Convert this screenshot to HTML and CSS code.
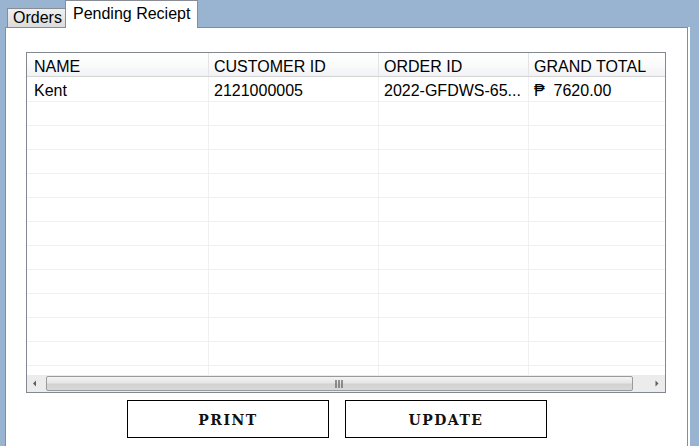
FILE: index.html
```html
<!DOCTYPE html>
<html>
<head>
<meta charset="utf-8">
<link rel="stylesheet" href="styles.css">
</head>
<body>
<div class="tabs">
  <div class="tab tab-orders">Orders</div>
  <div class="tab tab-active">Pending Reciept</div>
</div>
<div class="pane">
  <div class="grid">
    <div class="row head">
      <div class="cell first">NAME</div>
      <div class="cell">CUSTOMER ID</div>
      <div class="cell">ORDER ID</div>
      <div class="cell">GRAND TOTAL</div>
    </div>
    <div class="rows">
      <div class="row data first-row">
        <div class="cell first">Kent</div>
        <div class="cell">2121000005</div>
        <div class="cell">2022-GFDWS-65...</div>
        <div class="cell">₱&nbsp; 7620.00</div>
      </div>
      <div class="row data"><div class="cell"></div><div class="cell"></div><div class="cell"></div><div class="cell"></div></div>
      <div class="row data"><div class="cell"></div><div class="cell"></div><div class="cell"></div><div class="cell"></div></div>
      <div class="row data"><div class="cell"></div><div class="cell"></div><div class="cell"></div><div class="cell"></div></div>
      <div class="row data"><div class="cell"></div><div class="cell"></div><div class="cell"></div><div class="cell"></div></div>
      <div class="row data"><div class="cell"></div><div class="cell"></div><div class="cell"></div><div class="cell"></div></div>
      <div class="row data"><div class="cell"></div><div class="cell"></div><div class="cell"></div><div class="cell"></div></div>
      <div class="row data"><div class="cell"></div><div class="cell"></div><div class="cell"></div><div class="cell"></div></div>
      <div class="row data"><div class="cell"></div><div class="cell"></div><div class="cell"></div><div class="cell"></div></div>
      <div class="row data"><div class="cell"></div><div class="cell"></div><div class="cell"></div><div class="cell"></div></div>
      <div class="row data"><div class="cell"></div><div class="cell"></div><div class="cell"></div><div class="cell"></div></div>
      <div class="row data"><div class="cell"></div><div class="cell"></div><div class="cell"></div><div class="cell"></div></div>
      <div class="row data"><div class="cell"></div><div class="cell"></div><div class="cell"></div><div class="cell"></div></div>
    </div>
    <div class="hscroll">
      <div class="arrow">
        <svg width="17" height="17" viewBox="0 0 17 17"><path d="M6 8.5 L9 5.5 L9 11.5 Z" fill="#606060"/></svg>
      </div>
      <div class="track">
        <div class="thumb">
          <svg width="9" height="8" viewBox="0 0 9 8"><path d="M1 0v8M4 0v8M7 0v8" stroke="#6a6a6a" stroke-width="1.4"/></svg>
        </div>
      </div>
      <div class="arrow">
        <svg width="17" height="17" viewBox="0 0 17 17"><path d="M10.5 8.5 L7.5 5.5 L7.5 11.5 Z" fill="#606060"/></svg>
      </div>
    </div>
  </div>
  <div class="buttons">
    <button class="btn">PRINT</button>
    <button class="btn">UPDATE</button>
  </div>
</div>
</body>
</html>
```
FILE: styles.css
```css
html, body {
  margin: 0;
  padding: 0;
  height: 100%;
  overflow: hidden;
}
body {
  background: #99b4d1;
  font-family: "Liberation Sans", Arial, sans-serif;
  font-size: 16px;
  color: #000;
}
.tabs {
  display: flex;
  align-items: flex-end;
  height: 27px;
  padding-left: 7px;
}
.tab {
  box-sizing: border-box;
  border: 1px solid #898c95;
  border-bottom: none;
  line-height: 18px;
  white-space: nowrap;
}
.tab-orders {
  width: 59px;
  height: 19px;
  margin-right: -1px;
  padding: 0 0 0 5px;
  background: linear-gradient(#f0f0f0, #dcdcdc);
}
.tab-active {
  position: relative;
  z-index: 1;
  width: 133px;
  height: 28px;
  margin-bottom: -1px;
  padding: 4px 0 0 7px;
  background: #fff;
}
.pane {
  box-sizing: border-box;
  margin-left: 5px;
  width: 683px;
  height: 430px;
  background: #fff;
  border: 1px solid #898c95;
  border-bottom: none;
  box-shadow: 2px 0 0 #fff;
  padding: 24px 0 0 20px;
}
.grid {
  box-sizing: border-box;
  width: 640px;
  height: 341px;
  border: 1px solid #828790;
  display: flex;
  flex-direction: column;
}
.row {
  display: grid;
  grid-template-columns: 182px 170px 150px 1fr;
  box-sizing: border-box;
}
.cell {
  box-sizing: border-box;
  padding-left: 5px;
  white-space: nowrap;
  overflow: hidden;
  border-right: 1px solid #f0f0f0;
}
.cell:last-child {
  border-right: none;
}
.cell.first {
  padding-left: 7px;
}
.head {
  height: 24px;
  background: linear-gradient(#ffffff 0%, #fbfbfc 50%, #f1f2f4 100%);
  border-bottom: 1px solid #d5d5d5;
}
.head .cell {
  padding-top: 4px;
  line-height: 19px;
  border-right: 1px solid #e3e4e6;
}
.head .cell:last-child {
  border-right: none;
}
.rows {
  flex: 1;
  overflow: hidden;
}
.data {
  height: 24px;
  border-bottom: 1px solid #f0f0f0;
}
.data .cell {
  line-height: 23px;
}
.first-row {
  height: 25px;
}
.first-row .cell {
  line-height: 22px;
  padding-top: 3px;
}
.hscroll {
  height: 17px;
  display: flex;
  background: #ececec;
  flex: none;
}
.arrow {
  width: 17px;
  height: 17px;
}
.arrow svg {
  display: block;
}
.track {
  flex: 1;
  padding: 1px 2px;
}
.thumb {
  box-sizing: border-box;
  width: 587px;
  height: 15px;
  border: 1px solid #9a9a9a;
  border-radius: 2px;
  background: linear-gradient(#f4f4f4 0%, #e6e6e6 45%, #d2d2d2 55%, #d9d9d9 100%);
  display: flex;
  align-items: center;
  justify-content: center;
}
.thumb svg {
  display: block;
}
.buttons {
  display: flex;
  gap: 16px;
  margin-top: 7px;
  padding-left: 101px;
}
.btn {
  box-sizing: border-box;
  width: 202px;
  height: 38px;
  border: 1px solid #000;
  background: #fff;
  font-family: "DejaVu Serif", "Liberation Serif", serif;
  font-weight: bold;
  font-size: 14px;
  letter-spacing: 1.5px;
  color: #111;
  padding: 2px 0 0 0;
}
```
